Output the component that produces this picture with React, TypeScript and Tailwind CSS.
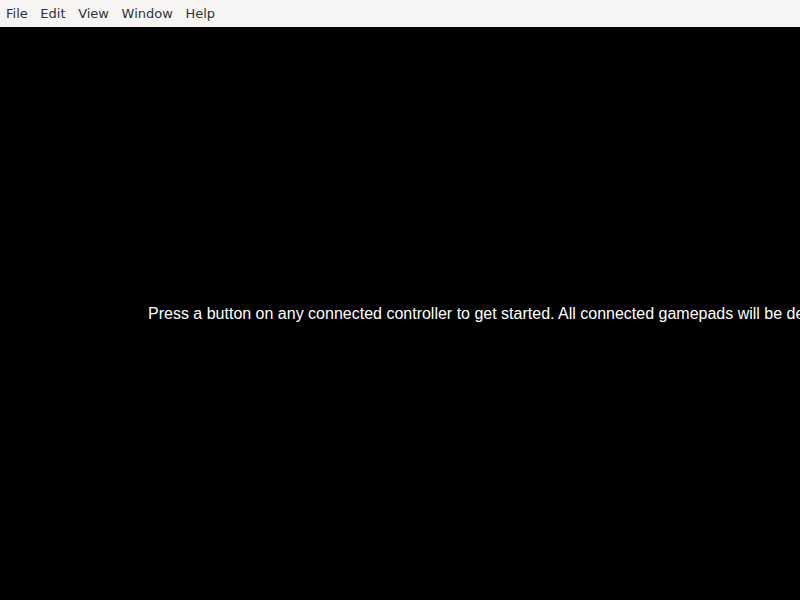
export default function App() {
  const menus = ['File', 'Edit', 'View', 'Window', 'Help']
  return (
    <div className="flex h-[600px] w-[800px] flex-col overflow-hidden bg-black">
      <div className="flex h-[27px] shrink-0 items-center gap-[12.6px] bg-[#f6f5f4] pl-[6px] font-['DejaVu_Sans',sans-serif] text-[13px] text-[#2e3436]">
        {menus.map((m) => (
          <span key={m}>{m}</span>
        ))}
      </div>
      <div className="flex flex-1 items-center overflow-hidden pl-[148px]">
        <p className="whitespace-nowrap font-['Liberation_Sans',Arial,sans-serif] text-[16px] text-white">
          Press a button on any connected controller to get started. All connected gamepads will be detected.
        </p>
      </div>
    </div>
  )
}
